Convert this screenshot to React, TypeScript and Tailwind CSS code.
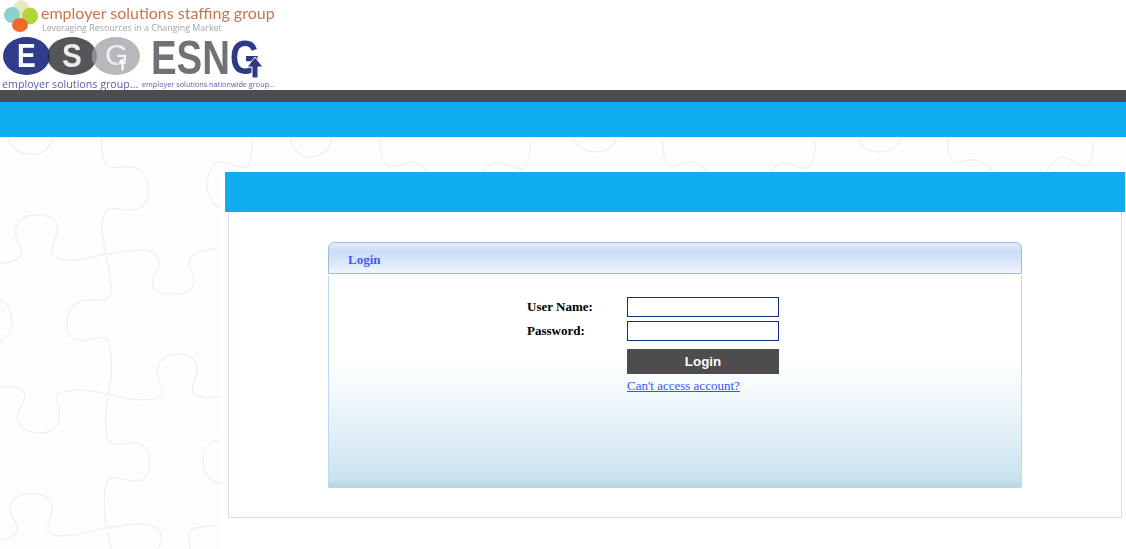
const PUZZLE_LINES = [
  'M102 137C101 150 102 160 106 165C116 172 130 162 140 170C150 178 152 198 142 207C130 215 116 205 108 210C102 216 102 225 102 232C104 245 110 270 112 293C108 305 96 298 84 300C70 304 66 315 67 325C68 338 76 343 88 340C100 336 108 336 110 345C112 360 113 372 110 385C106 405 105 425 107 438C112 452 128 438 142 445C152 452 152 470 145 478C132 488 118 472 108 480C103 490 104 510 106 525C108 535 110 542 111 549',
  'M0 263C12 263 24 258 22 250C18 240 12 232 18 223C26 212 48 213 56 222C62 232 50 244 52 253C58 262 68 261 78 260C95 257 120 250 142 250C155 250 160 258 159 265C156 275 150 280 154 288C160 296 186 298 193 287C198 277 186 268 190 258C196 251 208 250 218 248',
  'M0 387C10 386 24 387 25 395C25 405 15 412 18 421C24 436 52 438 59 422C62 410 54 398 58 394C68 388 90 390 108 394C120 397 128 400 140 400C150 400 162 399 163 393C162 382 155 376 158 366C165 350 190 350 197 364C200 375 190 385 193 393C198 399 210 398 220 397',
  'M0 540C10 540 18 535 17 526C14 518 8 512 11 504C16 490 46 490 52 504C55 515 46 522 48 530C54 538 64 536 74 535C90 532 115 525 140 524C155 524 163 532 162 540C161 544 159 547 157 549',
  'M190 549C189 540 189 534 191 530C198 526 208 526 220 525',
  'M0 300C8 303 12 312 12 320C12 330 7 338 0 342',
  'M220 440C210 441 203 450 203 460C203 472 210 482 220 484',
  'M8 137C12 150 22 155 32 154C44 155 50 148 53 137',
  'M252 141C252 150 252 160 248 166C240 172 226 158 216 163C208 170 204 185 210 197C213 203 216 206 220 208',
  'M290 137C293 150 300 157 311 157C322 157 330 150 332 137',
  'M380 137C380 148 381 158 385 164C392 171 402 163 412 162C420 163 424 168 427 172',
  'M483 172C487 166 494 162 502 163C510 165 518 171 525 168C530 160 531 150 530 141',
  'M573 137C577 148 586 152 597 152C608 152 614 146 617 137',
  'M663 141C663 150 663 160 667 165C674 170 684 161 692 162C699 164 704 168 707 172',
  'M770 172C774 166 780 163 787 163C795 165 803 171 810 167C815 160 815 150 815 141',
  'M858 137C861 148 870 152 880 152C891 152 899 146 902 137',
  'M948 137C948 148 948 156 952 160C960 166 968 158 976 160C984 163 990 168 993 172',
  'M1047 172C1050 164 1055 158 1063 157C1071 158 1078 168 1086 166C1093 160 1093 150 1093 141',
]

function PuzzleLines() {
  return (
    <svg className="absolute inset-0 blur-[0.7px]" width="1126" height="412" viewBox="0 137 1126 412" fill="none" aria-hidden="true">
      {PUZZLE_LINES.map((d) => (
        <g key={d}>
          <path d={d} stroke="#ffffff" strokeWidth="2" transform="translate(1 1.5)" />
          <path d={d} stroke="#f0f0f1" strokeWidth="1.5" />
        </g>
      ))}
    </svg>
  )
}

function LogoMarks() {
  return (
    <svg className="block" width="280" height="90" viewBox="0 0 280 90" aria-hidden="true">
      <defs>
        <clipPath id="esg-e">
          <ellipse cx="26.5" cy="56" rx="23.5" ry="19" />
        </clipPath>
        <clipPath id="esg-s">
          <ellipse cx="72" cy="56" rx="25" ry="19" />
        </clipPath>
      </defs>
      <ellipse cx="21" cy="9" rx="8" ry="9" fill="#e5e8c4" />
      <ellipse cx="12" cy="15" rx="8" ry="8" fill="#8fd0cf" />
      <ellipse cx="30" cy="16" rx="8" ry="8.5" fill="#b4d334" />
      <ellipse cx="20" cy="25" rx="8" ry="7" fill="#ef6a2a" />
      <ellipse cx="26.5" cy="56" rx="23.5" ry="19" fill="#303c8c" />
      <ellipse cx="72" cy="56" rx="25" ry="19" fill="#55565a" />
      <ellipse cx="116" cy="56" rx="24" ry="19" fill="#b7b8bb" />
      <ellipse cx="72" cy="56" rx="25" ry="19" fill="#2b2f5f" clipPath="url(#esg-e)" />
      <ellipse cx="116" cy="56" rx="24" ry="19" fill="#8b8c90" clipPath="url(#esg-s)" />
    </svg>
  )
}

function LogoArrows() {
  return (
    <svg className="absolute left-0 top-0" width="280" height="90" viewBox="0 0 280 90" aria-hidden="true">
      <path d="M121 71v-7h-4l5-6 5 6h-3v7z" fill="#ffffff" stroke="#b7b8bb" strokeWidth="0.8" />
      <path d="M252 78v-11h-5l8-10 8 10h-5v11z" fill="#2e3a87" stroke="#ffffff" strokeWidth="1" />
    </svg>
  )
}

export default function App() {
  return (
    <div className="flex h-[549px] w-[1126px] flex-col overflow-hidden bg-white font-['Liberation_Serif',serif]">
      <header className="relative h-[90px] shrink-0">
        <div className="relative h-[90px] blur-[0.4px]">
          <LogoMarks />
          <p className="absolute left-[41px] top-[3px] font-['Lato',sans-serif] text-[16px] leading-[20px] text-[#c8764f]">
            employer solutions staffing group
          </p>
          <p className="absolute left-[42px] top-[23px] font-['Open_Sans',sans-serif] text-[8.9px] leading-[10px] text-[#a3a3a3]">
            Leveraging Resources in a Changing Market
          </p>
          <span className="absolute left-[17px] top-[39px] origin-left scale-x-[0.85] font-['Liberation_Sans',sans-serif] text-[33px] font-bold leading-[33px] text-white">E</span>
          <span className="absolute left-[62px] top-[39px] origin-left scale-x-[0.9] font-['Liberation_Sans',sans-serif] text-[33px] font-bold leading-[33px] text-[#ececec]">S</span>
          <span className="absolute left-[105px] top-[40px] font-['Liberation_Sans',sans-serif] text-[30px] leading-[30px] text-[#f0f0f2]">G</span>
          <span className="absolute left-[151px] top-[39px] origin-left scale-x-[0.8] font-['Liberation_Sans',sans-serif] text-[48px] font-bold leading-[38px] text-[#717276]">
            ESN<span className="text-[#2e3a87]">G</span>
          </span>
          <LogoArrows />
          <p className="absolute left-[2px] top-[78px] font-['Open_Sans',sans-serif] text-[10.7px] leading-[12px] text-[#5a62a8]">
            employer solutions group...
          </p>
          <p className="absolute left-[142px] top-[79px] font-['Open_Sans',sans-serif] text-[7.3px] leading-[10px] text-[#5a62a8]">
            employer solutions nationwide group...
          </p>
        </div>
      </header>
      <div className="h-3 shrink-0 bg-[#4d4d4f]" />
      <div className="h-[35px] shrink-0 bg-[#0fadf0]" />
      <main className="relative flex-1 bg-[#fdfdfd]">
        <PuzzleLines />
        <div className="absolute bottom-0 left-[220px] right-0 top-[35px] bg-white" />
        <div className="relative ml-[225px] mr-px mt-[35px]">
          <div className="h-10 bg-[#0fadf0]" />
          <div className="mx-[3px] h-[306px] border border-t-0 border-[#d5e0f0] bg-white px-[99px] pt-[30px]">
            <section>
              <h2 className="h-8 rounded-t-[6px] border border-[#9db9e2] bg-[linear-gradient(#e4edf9,#cbdcf6_30%,#dfe9fa_70%,#f2f6fd)] pl-[19px] text-[13px] font-bold leading-[33px] text-[#3f5bff]">
                Login
              </h2>
              <div className="mt-0.5 h-[212px] border-x border-b-2 border-[#b9d7f7] border-b-[#bcd6ee] bg-[linear-gradient(#ffffff_0%,#ffffff_40%,#f0f8fb_58%,#dcedf5_80%,#c8e3ee_97%,#b9d5e0_100%)] pl-[198px] pt-[21px]">
                <form className="grid grid-cols-[100px_152px] gap-y-1 text-[13px] leading-5">
                  <label className="font-bold text-black" htmlFor="user">User Name:</label>
                  <input id="user" type="text" className="h-5 border border-[#0a3185] bg-white outline-none" />
                  <label className="font-bold text-black" htmlFor="password">Password:</label>
                  <input id="password" type="password" className="h-5 border border-[#0a3185] bg-white outline-none" />
                  <button
                    type="button"
                    className="col-start-2 mt-1 h-[25px] bg-[#4d4c4e] font-['Liberation_Sans',sans-serif] text-[13.33px] font-bold text-white"
                  >
                    Login
                  </button>
                  <a href="#" className="col-start-2 text-[13px] leading-[15px] text-[#3f51f5] underline">
                    Can't access account?
                  </a>
                </form>
              </div>
            </section>
          </div>
        </div>
      </main>
    </div>
  )
}
